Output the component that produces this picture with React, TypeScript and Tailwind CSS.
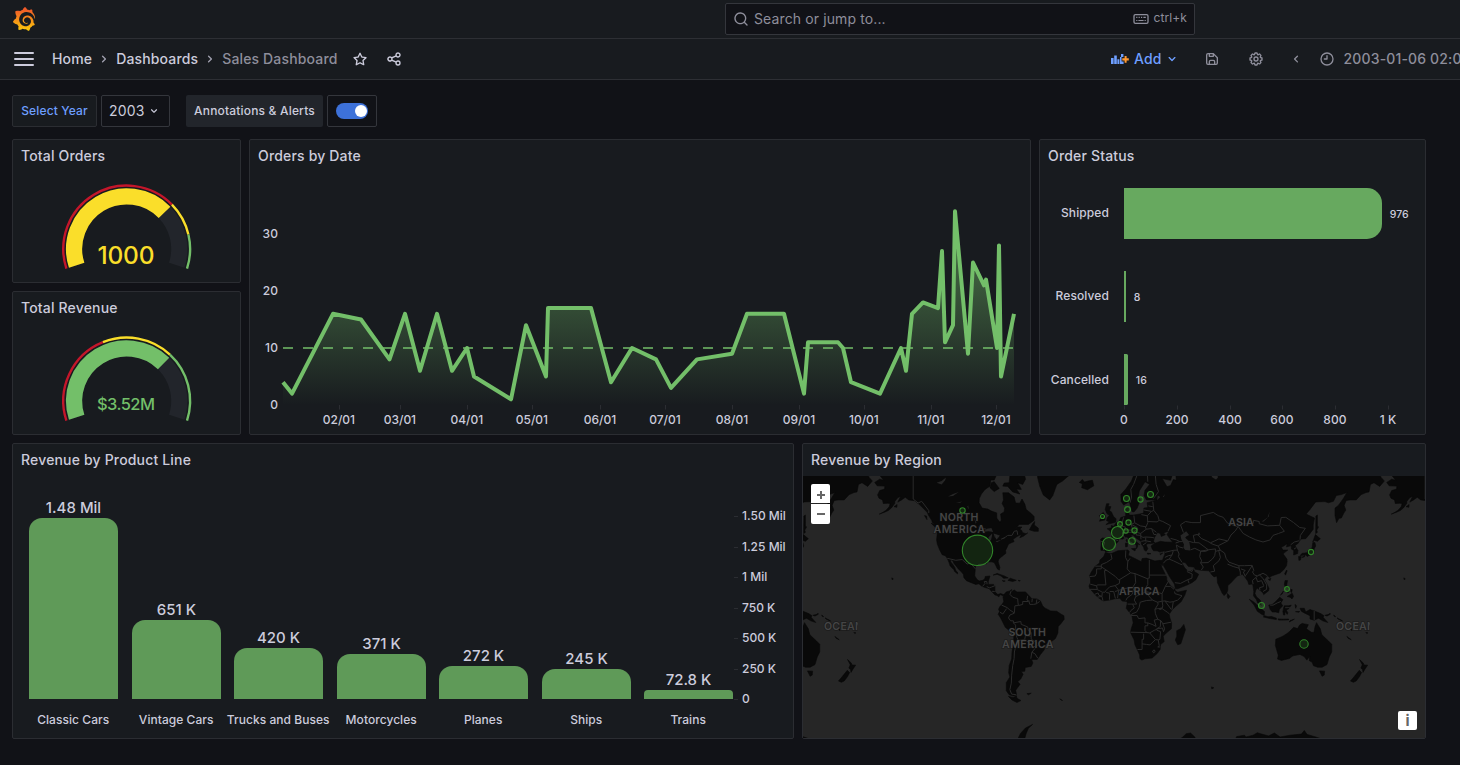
import React from "react";
import { SiGrafana } from "react-icons/si";

/* ---------- icons ---------- */

const ICONS = {
  angleDown:
    "M17,9.17a1,1,0,0,0-1.41,0L12,12.71,8.46,9.17a1,1,0,0,0-1.41,0,1,1,0,0,0,0,1.42l4.24,4.24a1,1,0,0,0,1.42,0L17,10.59A1,1,0,0,0,17,9.17Z",
  angleRight:
    "M14.83,11.29,10.59,7.05a1,1,0,0,0-1.42,0,1,1,0,0,0,0,1.41L12.71,12,9.17,15.54a1,1,0,0,0,0,1.41,1,1,0,0,0,.71.29,1,1,0,0,0,.71-.29l4.24-4.24A1,1,0,0,0,14.83,11.29Z",
  angleLeft:
    "M11.29,12l3.54-3.54a1,1,0,0,0,0-1.41,1,1,0,0,0-1.42,0L9.17,11.29a1,1,0,0,0,0,1.42L13.41,17a1,1,0,0,0,.71.29,1,1,0,0,0,.71-.29,1,1,0,0,0,0-1.41Z",
  search:
    "M21.71,20.29,18,16.61A9,9,0,1,0,16.61,18l3.68,3.68a1,1,0,0,0,1.42,0A1,1,0,0,0,21.71,20.29ZM11,18a7,7,0,1,1,7-7A7,7,0,0,1,11,18Z",
  clock:
    "M12,2A10,10,0,1,0,22,12,10,10,0,0,0,12,2Zm0,18a8,8,0,1,1,8-8A8,8,0,0,1,12,20ZM12,6a1,1,0,0,0-1,1v4H8a1,1,0,0,0,0,2h4a1,1,0,0,0,1-1V7A1,1,0,0,0,12,6Z",
  share:
    "M18,14a4,4,0,0,0-3.08,1.48l-5.1-2.35a3.64,3.64,0,0,0,0-2.26l5.1-2.35A4,4,0,1,0,14,6a4.17,4.17,0,0,0,.07.71L8.79,9.14a4,4,0,1,0,0,5.72l5.28,2.43A4.17,4.17,0,0,0,14,18a4,4,0,1,0,4-4ZM18,4a2,2,0,1,1-2,2A2,2,0,0,1,18,4ZM6,14a2,2,0,1,1,2-2A2,2,0,0,1,6,14Zm12,6a2,2,0,1,1,2-2A2,2,0,0,1,18,20Z",
  star:
    "M22,9.67A1,1,0,0,0,21.14,9l-5.69-.83L12.9,3a1,1,0,0,0-1.8,0L8.55,8.16,2.86,9a1,1,0,0,0-.81.68,1,1,0,0,0,.25,1l4.13,4-1,5.68A1,1,0,0,0,6.9,21.44L12,18.77l5.1,2.67a.93.93,0,0,0,.46.12,1,1,0,0,0,.59-.19,1,1,0,0,0,.4-1l-1-5.68,4.13-4A1,1,0,0,0,22,9.67Zm-6.15,4a1,1,0,0,0-.29.88l.72,4.2-3.76-2a1.06,1.06,0,0,0-.94,0l-3.76,2,.72-4.2a1,1,0,0,0-.29-.88l-3-3,4.21-.61a1,1,0,0,0,.76-.55L12,5.7l1.88,3.82a1,1,0,0,0,.76.55l4.21.61Z",
  save:
    "M20.71,9.29l-6-6a1,1,0,0,0-.32-.21A1.09,1.09,0,0,0,14,3H6A3,3,0,0,0,3,6V18a3,3,0,0,0,3,3H18a3,3,0,0,0,3-3V10A1,1,0,0,0,20.71,9.29ZM9,5h4V7H9Zm6,14H9V16a1,1,0,0,1,1-1h4a1,1,0,0,1,1,1Zm4-1a1,1,0,0,1-1,1H17V16a3,3,0,0,0-3-3H10a3,3,0,0,0-3,3v3H6a1,1,0,0,1-1-1V6A1,1,0,0,1,6,5H7V8A1,1,0,0,0,8,9h6a1,1,0,0,0,1-1V6.41l4,4Z",
  cog:
    "M21.32,9.55l-1.89-.63.89-1.78A1,1,0,0,0,20.13,6L18,3.87a1,1,0,0,0-1.15-.19l-1.78.89-.63-1.89A1,1,0,0,0,13.5,2h-3a1,1,0,0,0-.95.68L8.92,4.57,7.14,3.68A1,1,0,0,0,6,3.87L3.87,6a1,1,0,0,0-.19,1.15l.89,1.78-1.89.63A1,1,0,0,0,2,10.5v3a1,1,0,0,0,.68.95l1.89.63-.89,1.78A1,1,0,0,0,3.87,18L6,20.13a1,1,0,0,0,1.15.19l1.78-.89.63,1.89a1,1,0,0,0,.95.68h3a1,1,0,0,0,.95-.68l.63-1.89,1.78.89A1,1,0,0,0,18,20.13L20.13,18a1,1,0,0,0,.19-1.15l-.89-1.78,1.89-.63A1,1,0,0,0,22,13.5v-3A1,1,0,0,0,21.32,9.55ZM20,12.78l-1.2.4A2,2,0,0,0,17.64,16l.57,1.14-1.1,1.1L16,17.64a2,2,0,0,0-2.79,1.16l-.4,1.2H11.22l-.4-1.2A2,2,0,0,0,8,17.64l-1.14.57-1.1-1.1L6.36,16A2,2,0,0,0,5.2,13.18L4,12.78V11.22l1.2-.4A2,2,0,0,0,6.36,8L5.79,6.89l1.1-1.1L8,6.36A2,2,0,0,0,10.82,5.2l.4-1.2h1.56l.4,1.2A2,2,0,0,0,16,6.36l1.14-.57,1.1,1.1L17.64,8a2,2,0,0,0,1.16,2.79l1.2.4ZM12,8a4,4,0,1,0,4,4A4,4,0,0,0,12,8Zm0,6a2,2,0,1,1,2-2A2,2,0,0,1,12,14Z",
};

function Icon({ name, className }: { name: keyof typeof ICONS; className: string }) {
  return (
    <svg viewBox="0 0 24 24" fill="currentColor" className={"shrink-0 " + className}>
      <path d={ICONS[name]} />
    </svg>
  );
}

function KeyboardIcon() {
  return (
    <svg viewBox="0 0 16 12" className="h-3 w-4 shrink-0" fill="none" stroke="currentColor">
      <rect x="1" y="1.6" width="14" height="8.8" rx="1.4" strokeWidth="1.3" />
      <path d="M3.2 4.4h1.2M5.6 4.4h1.2M8 4.4h1.2M10.4 4.4h2.4M3.2 7.5h1.2M5.4 7.5h5.2M11.6 7.5h1.2" strokeWidth="1.2" />
    </svg>
  );
}

function AddPanelIcon() {
  return (
    <svg viewBox="0 0 19 12" className="h-3 w-[19px] shrink-0">
      <path d="M1 5h2.6v6H1zM4.2 2.5h2.6V11H4.2zM7.4 6.3h2V11h-2zM10 4h1.6v7H10zM11 1h2.4v3H11zM11.4 8.4h2.2V11h-2.2z" fill="#6e9fff" />
      <path d="M14.6 3h2v2.2h2.2v2.2h-2.2v2.3h-2V7.4h-2.3V5.2h2.3z" fill="#ff9830" />
    </svg>
  );
}

/* ---------- shared pieces ---------- */

function Panel({ title, className, children }: { title: string; className?: string; children: React.ReactNode }) {
  return (
    <section className={"flex flex-col overflow-hidden rounded-[2px] border border-[#2b2d32] bg-[#181b1f] " + (className ?? "")}>
      <h2 className="flex h-8 shrink-0 items-center px-2 text-sm font-medium tracking-[0.17px] text-[#ccccdc]">{title}</h2>
      {children}
    </section>
  );
}

const polar = (cx: number, cy: number, r: number, deg: number) => {
  const a = (deg * Math.PI) / 180;
  return `${(cx + r * Math.cos(a)).toFixed(2)} ${(cy - r * Math.sin(a)).toFixed(2)}`;
};

const arc = (r: number, from: number, to: number) =>
  `M${polar(113.7, 77, r, from)}A${r} ${r} 0 ${from - to > 180 ? 1 : 0} 1 ${polar(113.7, 77, r, to)}`;

type GaugeProps = {
  title: string;
  value: string;
  size: number;
  width: number;
  baseline: number;
  color: string;
  end: number;
  thresholds: [number, number, string][];
};

function Gauge({ title, value, size, width, baseline, color, end, thresholds }: GaugeProps) {
  return (
    <Panel title={title} className="h-36">
      <svg viewBox="0 0 227 110" className="h-[110px] w-[227px]" fill="none">
        <path d={arc(52.6, 198, -18)} stroke="#22252b" strokeWidth="16.2" />
        <path d={arc(52.6, 198, end)} stroke={color} strokeWidth="16.2" />
        {thresholds.map(([a, b, c]) => (
          <path key={a} d={arc(63.4, a, b)} stroke={c} strokeWidth="2.4" />
        ))}
        <text x="113" y={baseline} fontSize={size} fill={color} fontWeight="550" textAnchor="middle" textLength={width}>
          {value}
        </text>
      </svg>
    </Panel>
  );
}

/* ---------- orders by date ---------- */

const ORDERS: [number, number][] = [
  [283, 4], [292, 2], [333, 16], [361, 15], [389.5, 8], [405, 16], [420, 6], [437, 16], [452, 6], [467, 10],
  [474, 5], [511, 1], [526, 14], [546, 5], [548, 17], [591, 17], [611, 4], [632, 10], [656, 8], [671, 3],
  [697, 8], [732, 9], [747, 16], [784, 16], [804, 2], [808, 11], [838, 11], [843, 10], [851, 4], [880, 2],
  [901, 10], [906, 6], [912, 16], [923, 18], [938, 17], [942, 27], [945, 11], [953, 14], [955, 34], [968, 9],
  [973, 25], [984, 21], [986, 22], [997, 10], [999, 28], [1001, 5], [1014, 16],
];

const MONTHS: [number, string][] = [
  [339.5, "02/01"], [400.5, "03/01"], [467.5, "04/01"], [532.5, "05/01"], [600.5, "06/01"], [665.5, "07/01"],
  [732.5, "08/01"], [799.5, "09/01"], [864.5, "10/01"], [931.5, "11/01"], [996.5, "12/01"],
];

function OrdersByDate() {
  const line = ORDERS.map(([x, v]) => `${x} ${(405 - v * 5.7).toFixed(1)}`).join("L");
  return (
    <svg viewBox="250 172 780 262" className="h-[262px] w-[780px]" fontWeight="450">
      <defs>
        <linearGradient id="orders-fill" gradientUnits="userSpaceOnUse" x1="0" y1="211" x2="0" y2="405">
          <stop offset="0" stopColor="#73bf69" stopOpacity="0.6" />
          <stop offset="1" stopColor="#73bf69" stopOpacity="0" />
        </linearGradient>
      </defs>
      {[0, 10, 20, 30].map((v) => (
        <text key={v} x="278" y={409.2 - v * 5.7} textAnchor="end" fontSize="12" letterSpacing="0.1" fill="#ccccdc">
          {v}
        </text>
      ))}
      {MONTHS.map(([x, label]) => (
        <g key={label}>
          <path d={`M${x} 405v4.5`} stroke="#2b2d32" />
          <text x={x - 0.6} y="424" textAnchor="middle" fontSize="12" fill="#ccccdc">
            {label}
          </text>
        </g>
      ))}
      <path d={`M283 405L${line}L1014 405Z`} fill="url(#orders-fill)" />
      <path d={`M${line}`} fill="none" stroke="#73bf69" strokeWidth="4" strokeLinejoin="round" />
      <path d="M283 348H1014" stroke="#73bf69" strokeOpacity="0.75" strokeWidth="2" strokeDasharray="10 10" />
    </svg>
  );
}

/* ---------- order status ---------- */

function OrderStatus() {
  return (
    <svg viewBox="1040 172 385 262" className="h-[262px] w-[385px]" fill="#ccccdc" fontWeight="450">
      <g fill="#67a95f">
        <path d="M1124 188h243a15 15 0 0 1 15 15v21a15 15 0 0 1-15 15h-243z" />
        <path d="M1124 271h2v51h-2z" />
        <path d="M1124 354h2.5q1.5 0 1.5 1.5v48q0 1.5-1.5 1.5h-2.5z" />
      </g>
      <g textAnchor="end" fontSize="12" letterSpacing="0.1">
        <text x="1109" y="217">Shipped</text>
        <text x="1109" y="300">Resolved</text>
        <text x="1109" y="384">Cancelled</text>
      </g>
      <g fontSize="10.5">
        <text x="1389.8" y="218">976</text>
        <text x="1133.8" y="301">8</text>
        <text x="1135.8" y="384">16</text>
      </g>
      {[
        [1124.5, "0"], [1177.5, "200"], [1230.5, "400"], [1282.5, "600"], [1335.5, "800"], [1388.5, "1 K"],
      ].map(([x, label]) => (
        <g key={label}>
          <path d={`M${x} 405.5v4`} stroke="#2b2d32" />
          <text x={Number(x) - 0.5} y="424" textAnchor="middle" fontSize="12" letterSpacing="0.1">
            {label}
          </text>
        </g>
      ))}
    </svg>
  );
}

/* ---------- revenue by product line ---------- */

const PRODUCTS: [string, string, number, number, number][] = [
  ["Classic Cars", "1.48 Mil", 29, 518, 13],
  ["Vintage Cars", "651 K", 132, 620, 13],
  ["Trucks and Buses", "420 K", 234, 648, 13],
  ["Motorcycles", "371 K", 337, 654, 13],
  ["Planes", "272 K", 439, 666, 13],
  ["Ships", "245 K", 542, 669, 13],
  ["Trains", "72.8 K", 644, 690, 4],
];

const REVENUE_TICKS: [number, string][] = [
  [516.5, "1.50 Mil"], [547.5, "1.25 Mil"], [577.5, "1 Mil"], [608.5, "750 K"], [638.5, "500 K"], [669.5, "250 K"], [699.5, "0"],
];

function RevenueByProduct() {
  return (
    <svg viewBox="13 476 780 262" className="h-[262px] w-[780px]" fill="#ccccdc" fontWeight="450">
      {PRODUCTS.map(([name, value, x, top, r]) => (
        <g key={name} textAnchor="middle">
          <path d={`M${x} 699V${top + r}a${r} ${r} 0 0 1 ${r} ${-r}h${89 - 2 * r}a${r} ${r} 0 0 1 ${r} ${r}V699z`} fill="#5f9a58" />
          <text x={x + 44.5} y={top - 5} fontSize="15">
            {value}
          </text>
          <text x={x + 44.2} y="724" fontSize="12" letterSpacing="0.05">
            {name}
          </text>
        </g>
      ))}
      {REVENUE_TICKS.map(([y, label]) => (
        <g key={label}>
          <path d={`M734 ${y}h4`} stroke="#2b2d32" />
          <text x="742" y={y + 3.7} fontSize="12">
            {label}
          </text>
        </g>
      ))}
    </svg>
  );
}

/* ---------- revenue by region ---------- */

// Outlines are "lon lat" pairs separated by commas.
const LAND = [
  // North America
  "-168 71,-166.5 68.3,-163.5 67.1,-161.8 66.2,-164.5 66.5,-168 65.6,-166.3 64.6,-161 64.5,-161 63.6,-164.5 63.1,-166 61.7,-165 60.6,-162.5 60,-162 58.7,-158.8 58.8,-157.2 58.7,-157.8 57.5,-160.3 56,-163 55.1,-164.8 54.6,-161.5 55.3,-158.5 56,-156 57.2,-153.9 58.8,-154 59.4,-151.8 60.8,-149.8 61.2,-151.8 59.2,-149.5 59.9,-146.5 60.9,-144 60,-140 59.7,-137 58.5,-134 57,-131 55.2,-130.3 54.2,-128 52,-127.5 51,-124.8 49.9,-123 49,-122.5 47.5,-124.7 48.3,-124 46,-124.5 42.8,-124 40.5,-122.5 37.5,-120.6 34.6,-118.4 34,-117.2 32.8,-116 30.5,-115 28,-114 26.9,-112.2 25.5,-112 24.5,-110 22.9,-109.5 23.3,-111 25,-111.7 26.8,-113 28.6,-114.6 30.3,-114.8 31.7,-113.2 31.2,-112.3 29.4,-110.5 27.5,-109.2 26,-107 24,-105.7 22.5,-105.3 20.3,-103.5 18.3,-101 17.3,-97 15.8,-94.8 16.2,-92.5 14.5,-89.8 13.5,-87.6 13,-85.8 11,-83.5 8.6,-82 8.2,-80.8 7.3,-79.7 8.9,-78 8,-77.3 8.7,-79.5 9.6,-81.5 8.8,-83.5 10.8,-83.5 14.8,-84.5 15.8,-88.2 15.8,-88.2 18,-87 21.4,-90.3 21.1,-90.6 19.6,-92 18.6,-94.5 18.1,-96 19,-97.7 21.5,-97.4 25.5,-97.2 27.7,-95 29.2,-91.5 29.5,-89.3 29.1,-89.3 30.3,-86 30.4,-84 30,-82.8 28,-81.8 26,-80.4 25.2,-80.1 27,-81.3 30.5,-80.8 32,-78 34,-75.8 35.4,-76.1 37,-75 38.7,-74 40.5,-71.5 41.4,-70 41.8,-70.8 43,-68 44.4,-66.2 45.1,-64.8 45.6,-66 43.8,-63.5 44.6,-60.5 46.2,-61.5 45.8,-64 46.3,-64.8 47.5,-66 48,-64.5 49,-67.5 49,-70.5 47,-66.5 50.2,-60 50.2,-56 52,-56 53.6,-58 54.8,-61.5 56.5,-62.5 58.5,-64.5 60.3,-66 58.8,-69 58.9,-70 61,-74 62.4,-78 62.4,-77.5 60,-78.5 58.7,-76.7 57,-77 55.5,-79.5 54.6,-79 52,-80 51.2,-82.2 52.9,-82.3 55.1,-86 55.8,-88.5 56.6,-92.5 57,-94.7 59,-94.5 60.5,-93 62,-90.5 63.5,-87 64.5,-86.5 66.3,-84 66.3,-82 68,-82 70,-85 70,-88 68.5,-92 69.5,-95 72,-120 72,-128 70.3,-135 69.2,-141 69.7,-156 71.3,-163 69.5",
  // Baffin, Southampton, Greenland, Iceland
  "-62 66.5,-64 65,-67.5 65.5,-65 63.5,-68.5 63.6,-66 62,-71 62.7,-74.5 64.4,-78 64.5,-77 65.4,-73.5 65.5,-73 67.5,-76 69,-80 70,-80 72,-68 71,-63 68",
  "-87 64,-84 62.8,-80.5 63.8,-84 65.8,-86 65.5",
  "-53.5 70,-53.5 67,-52 64.5,-49.5 61.7,-45 60,-42.8 61.5,-40 65,-36 66,-30 68,-23 69.8,-22 72,-54 72",
  "-24.2 65.6,-22 65.2,-22.5 64,-18.5 63.4,-14 64.6,-15 66.2,-18 66,-20.5 65.7,-22 66.4",
  // Vancouver, Kodiak, Queen Charlotte, Newfoundland
  "-128.3 50.7,-125 50,-123.5 48.4,-126 49.2",
  "-154.5 57.5,-152.3 58.3,-152.5 57.3",
  "-133 54,-131.6 53.8,-131.3 52.3",
  "-59.3 47.7,-57 50.5,-55.5 51.5,-55.8 49.9,-53 48.5,-53 47,-56 47",
  // Caribbean
  "-84.8 22,-82 23.1,-77 21.5,-74.2 20.2,-77.5 19.9,-79 21.4,-82 22.5",
  "-74.4 18.5,-72.8 19.9,-68.5 18.6,-71 17.8",
  "-78.3 18.4,-76.3 18.1,-77.5 17.8",
  "-67.2 18.5,-65.7 18.4,-66.5 18",
  // South America
  "-77.3 8.7,-75.5 10.7,-73 11.4,-71.7 12.3,-71.5 10.8,-70 12,-68 10.6,-62 10.7,-60 8.5,-57.5 6,-54 5.8,-51.5 4.3,-50 1,-48.5 -0.5,-44.3 -2.6,-40 -2.9,-37.2 -4.8,-35 -6,-34.8 -8.5,-37.2 -11.5,-39 -13.5,-39.2 -17.8,-41 -21.5,-43 -23,-46.5 -24.1,-48.6 -26,-48.8 -28.6,-51.5 -31.5,-53.8 -34.4,-57.8 -34.4,-56.8 -36.5,-58 -38.4,-62.2 -39,-62.5 -41,-65 -41.2,-63.7 -42.6,-65.4 -45,-67.5 -46.3,-65.8 -47.5,-68.9 -50.3,-68.3 -52.4,-70.5 -52.8,-73.5 -52.3,-75.5 -50.5,-75.5 -46.8,-73 -44,-73.8 -41.8,-73.5 -38,-71.7 -34,-71.5 -30,-70.4 -25,-70.2 -19,-73 -16.5,-76.2 -14,-78.5 -9.5,-79.8 -7,-81.2 -5,-80.3 -3,-80.9 -1.5,-80 0.5,-78.5 2,-77.3 4,-77.8 7",
  "-68.5 -52.7,-68 -53.8,-65.2 -54.7,-68 -55.5,-71.5 -54.5,-74 -53,-70.5 -53.5",
  "-61 -51.8,-58 -51.6,-60 -52.3",
  // Eurasia
  "-9 38.6,-8.8 41.5,-9.2 43,-8 43.7,-2 43.4,-1.2 45,-2.3 47,-4.6 48.2,-1.5 48.7,-1.7 49.7,0 49.4,1.6 50.8,4 51.8,5 53.2,8.5 53.8,8.2 56.5,10.5 57.6,10.5 55.5,11 54.2,14 54.2,18.5 54.7,21 55,21.2 57,24 57.2,23.5 59,28 59.6,30 60,23 60,21.3 61.5,22 63.2,25.3 65,22 65.8,18 63,17.2 61,18.8 60,16.5 57,14.3 55.5,12.9 55.6,11.3 58.8,10.5 59.3,7 58.1,5.2 59.5,5 61.8,8.5 63.6,12.5 66,15 68.4,20 70,28 71.2,31 70,41 67.5,40 66.2,34 66.7,37.5 64.3,40 64.7,42 66.4,44 66.2,43.5 68.5,50 68.2,54 68.5,60 69,67 69,69 67,72 66.3,73.5 67,72 72,80 73,180 73,188 67,190.3 66,187 64.4,183 65.5,180.5 65,179.5 62.7,177.5 62.5,174 61.8,170.5 60,166 60,163.5 59.8,162 58,163.2 56.2,161.8 55,160 53,158.4 52.9,156.7 51,155.6 54,155.6 57,158 58,161.5 60.5,164 62.5,160 61.8,156.5 61.5,154.5 59.5,151 59,148.5 59.4,142 59.3,138 56.5,135.3 54.6,138.5 53.7,141.2 53,140.3 50,140.3 48,137.5 45.5,135 43.3,132 43.2,130.7 42.3,129.7 41,127.5 39.7,128.3 38.6,129.5 37,129.3 35.3,126.5 34.4,126.6 37,125 37.8,124.8 39.7,121.5 39,122 40.7,119 39.2,117.7 38.9,119 37.2,122.4 37.2,120.3 36,119.2 35,121.8 32,121.9 30.5,121.5 28,119.5 25.5,117 23.4,114 22.4,110.5 21.3,109.8 20.4,108 21.6,105.8 19.2,107.5 16.5,109.2 13.2,109 11.5,105.5 8.8,104.8 10.3,102.5 12,100.9 13.4,99.9 12,99.3 9.5,100.5 7.2,103 5,103.5 2,104 1.3,101.3 2.9,100.3 5.5,98.3 8,98.5 11,97.7 16,95 15.8,94.3 18,92 21,90.5 22.5,87 21.5,85 19.6,82.3 16.7,80.2 15,80.2 12,79.5 10,77.6 8.1,76.3 9.8,74.8 13,73 17,72.7 20.5,72.5 21.5,70.5 20.8,69 22.3,67 24.8,61.5 25.1,57.3 25.8,56.5 27.1,52.5 27.5,50.5 29.8,48.5 30.2,48 29.5,50 26.5,51.3 25.5,51.5 24.3,54 24.2,56.2 26,56.8 24.2,59.8 22.5,57.8 19,55 17,52 15.6,45 12.8,43.4 12.8,42.7 16,39.2 21,37 25,35 28,34.8 29.5,34 28,32.6 29.8,32.3 31.2,34.3 31.3,35 33,36 35,36 36.8,32.5 36.1,30.5 36.8,28 36.8,27 38,26.3 39.5,29 41,33 42,36 41.6,41.5 41.5,38.5 44.3,37.5 45.5,39 47.2,35 46.2,36.3 45.3,33.5 44.5,32.8 46,30.8 46.4,28.7 44,28 42,29 41.2,26.5 40.8,24 40.7,22.8 40.2,24 38,22.8 36.6,21.5 37.2,21 38.8,19.4 40.5,19.4 41.9,16 43.5,14 45,12.4 45.3,12.4 44.2,14 42.4,16.1 41.6,18.4 40.1,17 40.5,16.8 39.2,16 38,15.8 40,13.8 41.1,11 42.4,10 44,8.5 44.3,6.5 43.1,3.3 43.3,3.2 41.8,-0.2 39.5,-0.6 38,-2.2 36.8,-5.5 36.1,-6.5 37,-9 37.1",
  // Africa and Madagascar
  "-5.9 35.8,-2 35.1,3 36.9,10 37.3,11 36.5,10.2 34.3,15 32.3,19.5 30.4,20 32.3,23 32.6,29 30.9,32.3 31.3,32.6 29.9,33.8 27,35.6 23.8,37.3 20.5,37.3 18.8,39.5 15.5,43 12.5,43.3 11.5,45 10.5,51.2 11.9,50 8.5,47.5 4,43.5 0.5,41 -2,39 -5,39.5 -7.5,40.7 -11,40.6 -15,37 -17.8,34.8 -20,35.5 -23.5,33 -25.4,32.6 -28.4,30.5 -31,27 -33.6,22 -34.1,19.8 -34.8,18.4 -34,18.2 -31.8,16.5 -28.5,14.9 -25.5,14.4 -22.5,11.8 -17.5,12.3 -15,13.7 -11,12.8 -6,11.5 -4.2,8.8 -0.8,9.5 2.5,9.5 4,6 4.3,4.3 6.3,1 6,-3 5,-7.5 4.4,-11 6.8,-13.3 9,-15 11,-16.8 13,-17.4 14.7,-16.3 17,-16.3 19.8,-17 21.5,-15.8 23.9,-13 27.7,-10 29.6,-9.7 31.4,-7 33.5",
  "49.3 -12,50.4 -15.7,47.2 -24.9,45 -25.5,43.3 -22.5,44.4 -20,44.3 -16.3,47 -15",
  // British Isles
  "-5.5 50.1,1.4 51.2,1.7 52.7,0 53.5,-1.6 55.5,-3 56,-2 57.5,-4 57.7,-3.2 58.6,-5 58.6,-6 56.5,-4.8 54.8,-3 54,-4.5 53.2,-5 51.8,-3 51.4",
  "-10 51.6,-6.2 52.2,-6 54,-7.3 55.3,-10 54,-9 53",
  // Mediterranean islands
  "8.2 41,9.7 41,9.6 39.2,8.4 39", "8.6 42.6,9.4 43,9.4 41.5", "12.5 38,15.5 38.2,15 36.7", "23.6 35.5,26.2 35.2,24 34.9", "32.4 35,34.5 35.6,33 34.6",
  "20 77,28 78,60 76,57 72,54 70.8,52 72",
  // Sri Lanka, Hainan, Taiwan
  "80 9.6,81.8 7.5,80.5 6,79.8 7.5", "108.7 19.2,110.5 20,110 18.4", "120.2 23,121.6 25.2,121.9 24.7,120.8 22",
  // Indonesia and New Guinea
  "95.3 5.6,98 4,100.5 2,103.5 -1,106 -3,105.8 -5.8,104 -5,101 -2.8,98.7 1.5",
  "105.2 -6.8,106.2 -6,108.5 -6.7,111 -6.5,114.5 -7.8,114.3 -8.7,109 -7.8",
  "109 1.5,111.5 2,113.5 3.5,116.8 7,119 5.3,117.5 3,118.8 1,116.5 -1.5,116 -3.9,114 -3.4,111.5 -3.4,110 -1.5",
  "119.4 -5.5,120.3 -5.5,120.5 -3,122 -5,122.5 -4,121.3 -2,123.3 -0.9,120.2 -1,120.2 0.4,124 0.3,124.8 1.5,123 1,120 1,119.6 0,119 -3",
  "115.5 -8.2,119 -8.4,123 -8.3,123 -8.9,119 -9,116 -9", "123.5 -10.3,127 -8.4,124 -9.3", "127.5 2,128.5 1,128 -0.8", "127.8 -3.1,130.8 -3,130 -3.6",
  "131 -0.8,134 -0.8,135 -3.3,138 -1.7,141 -2.6,145.5 -4.5,147.8 -6,147.2 -7,150.5 -10.6,147 -9.5,144 -7.7,141 -9.1,138 -8.3,138 -6,134 -4,132 -2.8",
  "148.5 -5.7,151.5 -5,152 -4.2,152.2 -5,150 -6.2", "154.7 -5.5,156 -6.6,155.2 -6.5", "157 -7.5,160.5 -9.3,161 -9.8,158 -8.4", "164 -20.2,167 -22.3,165 -21.5", "177.3 -17.5,178.6 -17.7,178 -18.2", "167 -15,167.5 -16.3,166.7 -15.5",
  // Philippines
  "120.5 18.4,122.2 18.4,121.6 15,124 13,122.5 13.5,120.5 14,120 16", "122 7.5,125.5 9.7,126.4 7.5,125.4 5.8,124 7", "122 11.5,123.5 11,122.5 10", "124.5 12.4,125.5 12.2,125 10.2,124.5 11", "117.2 8.4,119.4 11.3,118.5 9.4",
  // Japan and Sakhalin
  "131 34,132.5 35.4,136 35.7,137 37.3,139.5 38.5,140 41.3,141.5 41.3,142 39.5,141 38,140.7 35.6,139 34.8,136 33.6,135 34.6",
  "130 33.5,131.9 33.5,131.3 31.4,130.2 31.3", "132.3 33,134.5 34.3,134 33.3", "140 41.6,141.8 45.4,145.3 43.3,143.2 42,141 42.5",
  "142 46,142.2 53.8,143.2 54.2,143.2 49.5,144 49,142.7 47.5,143.2 46.5",
  // Australia, Tasmania, New Zealand
  "114 -22,113.7 -26,115.7 -32,115.2 -34.2,118 -35,123.5 -33.9,126 -32.3,131 -31.5,134 -32.8,135.8 -34.8,137.8 -32.8,137.5 -35.2,139.5 -36,140.5 -38,143.5 -38.8,146.5 -38.8,150 -37.4,151.5 -33,153.3 -30,153.3 -25.2,150.8 -23,146.3 -19,145.3 -15,142.6 -10.8,141.6 -13.5,140.8 -17.5,139 -17.4,135.5 -15,136.8 -12.2,132.5 -11.3,130.7 -12.5,129.3 -14.9,126.5 -14,124 -16.5,122.2 -18,119 -20",
  "144.7 -40.8,148.3 -41,148 -43,146.5 -43.6",
  "172.8 -34.5,175.5 -36.5,176 -37.6,178.5 -37.7,177 -39.5,175.3 -41.6,175 -40,173.8 -39.3,174.8 -37.5",
  "172.7 -40.5,174.3 -41.7,172.8 -43.8,170.5 -46,168.5 -46.6,166.5 -46,170 -43",
  // Small islands
  "-156 20.2,-155 19.5,-155.8 19", "68.8 -48.8,70.4 -49.2,69 -49.7", "-37.9 -54,-36 -54.7,-37 -54.5",
  // Antarctica
  "-57 -63.3,-60 -64.5,-61.5 -66,-63 -68,-68 -68,-65.5 -66,-62 -64.4",
  "44 -68,48 -67.2,51 -66.1,54 -65.9,57 -67,58 -68", "85 -68,86.5 -66.9,89 -66.7,92 -66.5,93 -67,98 -66.5,101 -65.8,104 -66.2,109 -66.7,113 -65.9,117 -67,124 -66.5,132 -66.2,134 -65.2,136 -66.3,142 -67,150 -68",
];

const LAKES = [
  "-92 46.7,-89 48.2,-86 48.6,-84.7 46.6,-88 47", "-87.8 42,-88 44,-85.5 46,-85.5 45,-86.3 42.5", "-84.5 46,-80 45,-81.7 43.3,-83.5 44",
  "-83.2 41.8,-79 42.8,-82 41.5", "-79.7 43.3,-76.3 44,-77 43.3", "-98.5 53.5,-97 50.5,-96.5 51", "-116.5 61.2,-113 61.3,-109 62.7,-113 62",
  "-124.5 65.5,-121 66,-118 67,-118.5 66.2,-121 65", "-111 59,-106.5 59.4,-108 59", "-103 57.5,-101.8 56.5,-102.3 58",
  "47 45,51 47,53 45.2,51 44.5,50.3 43.8,53 42,53.8 39,53.8 37,50.3 37.3,49 38.5,49.4 40.3,47.5 43",
  "58.5 45,60 46.5,61 45.5", "104 51.5,109 53.5,109.7 55.6,108 53,105.5 51.5", "30.5 60,32.8 61,31 61.5", "34.5 61,36 62,35.3 61",
  "32 -0.5,34 0,33.5 -2,32 -2",
];

const BORDERS = [
  "-141 60.3,-141 69.7", "-141 60.3,-137.5 58.9,-135 59.5,-130 56,-130 55",
  "-117 32.5,-111 31.3,-106.5 31.8,-103 29,-101 29.7,-97.2 26", "-92.2 14.5,-90.5 16.5,-91 17.8,-89.2 17.8,-89 15.9", "-89.3 14.4,-87.5 13.5,-86 14,-83.3 15", "-85.5 11.1,-83.7 11",
  "-95 49,-92 48.3,-89.5 48", "-82.5 45.3,-82.5 43", "-79 43,-76 44.2,-74.6 45,-71.5 45,-70 47,-68 47.3,-67.5 45.3",
  "-72 11.5,-73 9,-71 7,-67.5 6,-67.3 3,-67 1.2,-69.5 1,-69.8 -4,-73 -2,-75 -0.2,-78.8 1.5", "-60.5 8,-61 5,-60 4,-64 4,-64 2,-66.9 1.2", "-59.8 5,-59 2,-56.5 2,-54.5 2.3,-52 4", "-57.2 6,-57.5 3.5", "-54 5.5,-54.5 2.5",
  "-80 -3.5,-78 -4.8,-75.3 -1", "-69.8 -4.2,-73 -5.5,-74 -7.5,-72.5 -9.5,-70.5 -9.5,-70.5 -11,-69 -12.5,-69 -17,-70.3 -18.3", "-70.5 -11,-65.3 -10,-65 -12,-60.5 -13.7,-60 -16.3,-58 -17.5,-58 -20,-62 -19.5,-62.6 -22.2", "-69 -17.5,-68 -21,-67 -22.8,-62.6 -22.2,-57.7 -25.2,-58.5 -27.2,-55 -26.5,-54.3 -24,-58 -22,-58 -20", "-67 -22.8,-68.5 -25,-69.8 -30,-70 -34,-71 -38,-71.7 -43,-72 -47,-73 -50,-71.8 -52,-68.4 -52.3", "-53.7 -26,-55.5 -28,-57.6 -30.2,-58.3 -34", "-57.6 -30.2,-55.5 -31,-53.4 -33.7",
  // Africa
  "-2 35,-1.2 32.2,-5 30,-8.7 28.7,-8.7 27.3", "-13 27.7,-8.7 27.7,-8.7 26,-12 26,-12 23.4,-13 21.4,-17 21", "-8.7 27.3,-4.8 25,-6.5 24.9,-5.5 15.5,-11.5 15.5,-12 14.8,-16.5 16", "-4.8 25,1.2 21.1,3.2 19,4.2 19.1,11.9 23.5,9.5 26,9.9 30.5,8.3 33,8.5 37", "9.9 30.5,11.5 32.5", "11.9 23.5,15 23,24 19.5,24 20,25 20,25 31.5", "25 22,36.8 22", "15 23,15.5 17,13.5 14,14 12.8", "24 19.5,24 15.7,22 13,23 10.9,27 9.8,32 10,34 9.5,36.3 14.5,38.5 18", "4.2 19,4 16.5,1 15,3.6 11.7,7 13,13.5 13.7", "-11.5 12.3,-8 10.5,-6.2 10.5,-5.3 11.8,-2.8 14.2,1 15", "-5.3 10.3,-2.8 9.8,-3 5.2", "-2.8 11,0 11,1.2 6.1", "0.9 11,3.5 11.7,2.7 6.4", "14 12.8,13 9,9.5 6.5,8.6 4.8", "14 12.8,15.5 10,15.5 7.4,14.5 5,16.1 2.2,9.8 2.2", "15.5 7.4,19 9,23 10.9", "18.6 3.5,23 4.7,27.3 5,24 8.7,23 10.9", "13.3 2.2,14.5 -0.5,12 -2.4,11.2 -3.8", "18.6 3.5,17.8 -0.5,16 -3.5,13 -4.6,12.3 -5.8", "12.3 -5.8,16.5 -5.9,17.5 -8,22 -7.5,22 -11,24 -11,24 -13,22 -13,22 -16.2,23.4 -17.6,11.8 -17.3", "24 -11,27 -12,29.8 -13.4,28.5 -9,31 -8.5,29.3 -4.5,29 -1.5,31.3 2.2,30.8 3.5,27.3 5", "30.8 3.5,34 4.2,36 4.4,39.5 3.5,41.9 3.9,41 -1.6", "34 4.2,34.5 1,34 -1,37.7 -3.5,39.2 -4.7", "34 4.2,34 9.5", "41.9 3.9,45 5,48 8,43 9.5,42.8 11", "36.3 14.5,40 14.5,42.4 12.5", "31 -8.5,33.3 -9.5,34.5 -11.6,40.4 -10.5", "34.5 -11.6,35.8 -15,35 -17,34.3 -14.5,30.2 -15,30.4 -16,33 -17,32.5 -22,31.3 -22.4,29.3 -22.2,25.3 -17.8,23.4 -17.6", "25.3 -17.8,28.8 -15.9,30.2 -15.5", "21 -18.3,21 -22,20 -22,20 -28.4,16.7 -28.5", "20 -25,23 -25.3,25.5 -25.6,29.3 -22.2", "31.3 -22.4,32 -26,31 -27,32.8 -26.9", "27.3 -29.5,28.5 -28.7,29.2 -29.7,28 -30.5,27.3 -29.5", "-11.5 7,-8.3 7.6,-7.5 4.5", "-13.2 9,-11 10,-10.5 8.4,-8.3 7.6", "-8.3 7.6,-8 10.2", "-16.7 12.5,-11.5 12.4,-12 14.8", "29 -1.5,30.7 -1,34 -1", "24 13,22 13,24 8.7", "40.5 -1.6,36 4.4", "33 -9.5,32.8 -13.5,30.2 -15",
  // Middle East and Central Asia
  "34.9 29.5,37 31.5,39 32,42 31,46.5 29.1,48.4 28.5", "36 36,42 37.1,44.8 37.2,46 35,45.5 33.5,48 30", "39 32,41 34.4,42 37.1", "44.8 37.2,44 40,46.5 38.9,48.8 38.4", "43.5 41.1,46.5 41.8,48.5 41.8", "40 43.5,44 42.7,46.5 41.8", "43 17,47 16.5,52 19,55 20,55.2 22.7,51.5 24.3", "52 19,53 16.6", "54 37.4,57 38.2,61.2 36.6,60.5 33.5,61.8 31,61 29.8,63 27.2,61.6 25.2", "61.2 36.6,64.6 36.5,66.5 37.4,71.5 37.9,71.5 36.5,74.9 37.2", "61 29.8,66.3 29.9,69.3 32,71 34,71.5 36.5", "61.2 36.6,66.5 37.4,60 41.2,57 41.3,56 45,59 45.5,61.5 43.5,66 42,68 41.2,71 42.2,74 43.2,80 42.2", "68 41,70.5 40.2,73.5 39.5,74.9 37.2", "53 42,56 41.3,57 41.3", "68 24,71 24.5,70 28,74 31,75 33,74 36.5,74.9 37.2", "50.5 51.5,47 50,49 46.4", "50.5 51.5,55 51,61 51,61 54,70 55.3,73.5 54,77 53.3,80 50.8,87.3 49.1", "87.3 49.1,85.5 47.2,82.5 45.2,80.2 42.2,74 39.8,73.5 39.5", "87.3 49.1,90 50.5,98 50.5,98.3 52,102.3 51.5,102.3 50.5,108 49.5,116.7 49.8,117.8 53.2,121 53.3,126.5 51,130.8 48.8,134.8 48.4,131.3 45,131 42.8", "87.7 49.1,91 46,95.5 44.2,100 42.7,105 41.6,110 42.7,112 45,116 46,120 47,116.7 49.8", "74.9 37.2,78 35.5,79 32.5,81 30.2,88 28,92 28,97.3 28.2,98.5 25,97.6 24,99 22", "80 29,84 27.5,88.2 26.4,88 28", "88.2 26.5,89 24,89 22", "92.5 21,91.2 24,92.5 25,89.5 26", "92.5 21.5,94.5 24,97.3 28", "99 22,101 21.5,105 23.2,108 21.6", "98 16,97.5 18.5,100 20.4,101 21.5", "100.1 20.4,101.2 17.6,104 18.4,105.5 15,105.2 14.3,102.5 13.6,102.9 11.8", "102.2 22.4,104.8 20,105.8 18.5,107.5 15.5,107.5 12.4,105 11", "124.4 40.1,127 41.6,130.6 42.3", "126.8 37.8,128.3 38.6", "141 -2.6,141 -9.1", "110 1.5,112 1.4,115 3,117.5 4", "54.6 24,56 26", "36 33,38.5 34,41 34.4",
  // Europe
  "-1.8 43.4,3.1 42.4", "-7 37.2,-7.3 39,-6.5 41.5,-8.8 42", "2.5 51.1,6 49.4,8.2 49,7.6 47.6,6 46.2,7.6 43.8", "7 53.3,6 51,6 49.4", "7.6 47.6,9.6 47.5,13 47.6,13 48.6,12.3 50.2,14.8 50.9,14.2 54", "14.8 50.9,18.8 49.5,22.8 49.1,24 51,23.6 53.9,19.5 54.4", "6.8 45.9,10 46.5,13.7 46.5,17 48,16.5 48.8,12.3 50.2", "13.7 46.5,16.5 46.4,19 46,22.9 48,22.2 49", "14 45.4,16 46.3", "19 46,19 44.9,20.5 44,22.6 44.2,27 44,28.5 43.7", "22.9 48,26.6 48.3,28.2 45.5,30 45.4", "26.6 48.3,30 46.5", "23.6 51.5,30.5 51.3,32 52,34.5 51.5,40 49.6,38.2 47.1", "32 52,31 54,28.2 56.1,27.5 59.4", "23.6 53.9,26.6 55.7,28.2 56.1", "21 56.3,26.6 55.7", "24.3 57.8,27.5 57.5", "28 60.5,31.5 62.8,29.8 65,29 69", "24 65.8,23.7 68", "11.5 59,12.5 61,12 63.5,14 65,17 68.2", "19.4 42,22 42.3,26.3 41.7", "20.5 40,23 41.3", "22.5 44,22.5 42", "16 46,15.8 45.2,19 45", "19 44.9,19.2 43",
];

const X0 = 1113.7;
const Y0 = 607.2;
const WORLD = 512;

function toPath(points: string, close: boolean) {
  const d = points
    .split(",")
    .map((pair) => {
      const [lon, lat] = pair.split(" ").map(Number);
      const x = X0 + (lon * WORLD) / 360;
      const y = Y0 - (WORLD / (2 * Math.PI)) * Math.log(Math.tan(Math.PI / 4 + (lat * Math.PI) / 360));
      return `${x.toFixed(1)} ${y.toFixed(1)}`;
    })
    .join("L");
  return `M${d}${close ? "Z" : ""}`;
}

const LAND_PATH = LAND.map((p) => toPath(p, true)).join("");
const LAKE_PATH = LAKES.map((p) => toPath(p, true)).join("");
const BORDER_PATH = BORDERS.map((p) => toPath(p, false)).join("");

const MARKERS: [number, number, number][] = [
  [962.5, 510.5, 2.7], [977.5, 550.3, 15.2], [1102.5, 516.5, 2], [1117.5, 532.5, 6], [1109, 544, 6.5], [1126.5, 498.5, 3],
  [1140.5, 499.5, 2.6], [1150.5, 494.5, 3], [1127.5, 509.5, 2.9], [1120, 524, 2.4], [1128.5, 522.5, 2.6], [1126, 531, 2.2],
  [1134.5, 530.5, 2.6], [1132, 541, 3.3], [1261.5, 605.5, 3], [1287, 589, 2.4], [1311, 552, 2.6], [1304, 644, 4.2],
];

const MAP_LABELS: [string, number, number, number][] = [
  ["NORTH", 939.5, 520.5, 39], ["AMERICA", 933.5, 532.5, 51.5], ["SOUTH", 1008.5, 635.5, 37.5], ["AMERICA", 1002, 647.7, 51.5],
  ["AFRICA", 1119, 594.5, 40.5], ["ASIA", 1228.3, 525.8, 25.5],
];

function RegionMap() {
  return (
    <div className="relative h-[262px] w-[622px] bg-[#262626]">
      <svg viewBox="803 476 622 262" className="block h-[262px] w-[622px]">
        <defs>
          <clipPath id="label-left"><rect x="803" y="610" width="54.7" height="30" /></clipPath>
          <clipPath id="label-right"><rect x="1300" y="610" width="69.7" height="30" /></clipPath>
        </defs>
        {[-WORLD, 0, WORLD].map((dx) => (
          <g key={dx} transform={`translate(${dx} 0)`}>
            <path d={LAND_PATH} fill="#090909" stroke="#090909" strokeWidth="0.6" strokeLinejoin="round" />
            <path d={LAKE_PATH} fill="#262626" />
            <path d={BORDER_PATH} fill="none" stroke="#2b2b2b" strokeWidth="1" strokeLinejoin="round" />
          </g>
        ))}
        <g fontSize="10.6" fontWeight="600" fill="#454545" stroke="#111111" strokeWidth="1.5" strokeOpacity="0.5" paintOrder="stroke">
          {MAP_LABELS.map(([label, x, y, w]) => (
            <text key={label + y} x={x} y={y} textLength={w}>{label}</text>
          ))}
          <g clipPath="url(#label-left)"><text x="824" y="629.5" textLength="39">OCEAN</text></g>
          <g clipPath="url(#label-right)"><text x="1336" y="629.5" textLength="39">OCEAN</text></g>
        </g>
        {MARKERS.map(([x, y, r]) => (
          <circle key={x} cx={x} cy={y} r={r} fill="#37872d" fillOpacity="0.22" stroke="#31842a" strokeWidth="1.1" />
        ))}
      </svg>
      <div className="absolute left-2 top-2 flex flex-col gap-px overflow-hidden rounded-[2px]">
        <span className="flex h-[19px] w-[19px] items-center justify-center bg-white pt-[3px]">
          <svg viewBox="0 0 8 8" className="h-2 w-2" stroke="#666" strokeWidth="2"><path d="M4 0v8M0 4h8" /></svg>
        </span>
        <span className="flex h-5 w-[19px] items-center justify-center bg-white">
          <svg viewBox="0 0 8 8" className="h-2 w-2" stroke="#666" strokeWidth="2"><path d="M0 4h8" /></svg>
        </span>
      </div>
      <div className="absolute bottom-2 right-2 flex h-[19px] w-[19px] items-center justify-center rounded-[2px] bg-white text-[15px] font-bold leading-none text-[#666]">
        i
      </div>
    </div>
  );
}

/* ---------- page ---------- */

export default function App() {
  return (
    <div className="flex h-[765px] w-[1460px] flex-col overflow-hidden bg-[#111217] font-[Inter,sans-serif] text-sm text-[#ccccdc]">
      <header className="shrink-0 bg-[#181b1f]">
        <div className="flex h-[39px] items-center border-b border-[#2d2f34] pl-3">
          <svg className="h-0 w-0" aria-hidden="true">
            <defs>
              <linearGradient id="logo-fill" x1="0" y1="0" x2="0" y2="1">
                <stop offset="0.1" stopColor="#f05a28" />
                <stop offset="1" stopColor="#fbca0a" />
              </linearGradient>
            </defs>
          </svg>
          <SiGrafana size={24} fill="url(#logo-fill)" className="shrink-0" />
          <div className="ml-[689px] flex h-8 w-[470px] items-center rounded-[2px] border border-[#34363c] bg-[#111217] px-[7px] text-[#8e8e9b]">
            <Icon name="search" className="h-4 w-4" />
            <span className="ml-[5px] tracking-[0.12px]">Search or jump to...</span>
            <span className="ml-auto flex items-center gap-1 text-xs tracking-[0.1px]">
              <KeyboardIcon />
              <span className="-mt-0.5">ctrl+k</span>
            </span>
          </div>
        </div>
        <div className="flex h-[41px] items-center overflow-hidden whitespace-nowrap border-b border-[#2d2f34] pl-3.5">
          <div className="flex w-5 shrink-0 flex-col gap-1">
            <i className="h-0.5 rounded bg-[#ccccdc]" />
            <i className="h-0.5 rounded bg-[#ccccdc]" />
            <i className="h-0.5 rounded bg-[#ccccdc]" />
          </div>
          <nav className="ml-[18px] flex w-[283px] shrink-0 items-center font-medium tracking-[0.15px]">
            <span>Home</span>
            <Icon name="angleRight" className="mx-1 h-4 w-4 text-[#a0a0ae]" />
            <span>Dashboards</span>
            <Icon name="angleRight" className="mx-1 h-4 w-4 text-[#a0a0ae]" />
            <span className="text-[#8e8e9b]">Sales Dashboard</span>
          </nav>
          <Icon name="star" className="ml-[17px] h-4 w-4" />
          <Icon name="share" className="ml-[18px] h-4 w-4" />
          <div className="ml-[708px] flex shrink-0 items-center font-medium text-[#6e9fff]">
            <AddPanelIcon />
            <span className="ml-[5px] tracking-[0.15px]">Add</span>
            <Icon name="angleDown" className="ml-0.5 h-4 w-4" />
          </div>
          <div className="flex shrink-0 items-center text-[#8e8e9b]">
            <Icon name="save" className="ml-6 h-4 w-4" />
            <Icon name="cog" className="ml-7 h-4 w-4" />
            <Icon name="angleLeft" className="ml-6 h-4 w-4" />
            <Icon name="clock" className="ml-[15px] h-4 w-4" />
            <span className="ml-[9px] font-medium tracking-[0.15px]">2003-01-06 02:00:00</span>
          </div>
        </div>
      </header>

      <main className="flex flex-col gap-3 pl-3 pt-[15px]">
        <div className="flex h-8 text-xs font-medium">
          <span className="flex w-[85px] items-center justify-center rounded-[2px] border border-[#2b2d32] bg-[#181b1f] tracking-[0.15px] text-[#6e9fff]">
            Select Year
          </span>
          <span className="ml-1 flex w-[69px] items-center rounded-[2px] border border-[#34363c] bg-[#111217] pl-[7px] text-sm font-normal tracking-[0.2px]">
            2003
            <Icon name="angleDown" className="ml-0.5 h-3.5 w-3.5" />
          </span>
          <span className="ml-4 flex w-[137px] items-center justify-center rounded-[2px] bg-[#22252b] tracking-[0.18px]">
            Annotations &amp; Alerts
          </span>
          <span className="ml-1 flex w-[50px] items-center justify-center rounded-[2px] border border-[#34363c] bg-[#111217]">
            <span className="flex h-4 w-8 items-center justify-end rounded-full bg-[#3d71d9] pr-px">
              <i className="h-3 w-3 rounded-full bg-white" />
            </span>
          </span>
        </div>

        <div className="flex flex-col gap-2">
          <div className="flex h-[296px] gap-2">
            <div className="flex w-[229px] flex-col gap-2">
              <Gauge
                title="Total Orders"
                value="1000"
                size={24.5}
                width={57}
                baseline={92}
                color="#fade2a"
                end={44}
                thresholds={[[198, 44.5, "#c4162a"], [44.5, 13.3, "#fade2a"], [13.3, -18, "#73bf69"]]}
              />
              <Gauge
                title="Total Revenue"
                value="$3.52M"
                size={16.5}
                width={58}
                baseline={86}
                color="#73bf69"
                end={45.5}
                thresholds={[[198, 112, "#c4162a"], [112, 47, "#fade2a"], [47, -18, "#73bf69"]]}
              />
            </div>
            <Panel title="Orders by Date" className="w-[782px]">
              <OrdersByDate />
            </Panel>
            <Panel title="Order Status" className="w-[387px]">
              <OrderStatus />
            </Panel>
          </div>
          <div className="flex h-[296px] gap-2">
            <Panel title="Revenue by Product Line" className="w-[782px]">
              <RevenueByProduct />
            </Panel>
            <Panel title="Revenue by Region" className="w-[624px]">
              <RegionMap />
            </Panel>
          </div>
        </div>
      </main>
    </div>
  );
}
